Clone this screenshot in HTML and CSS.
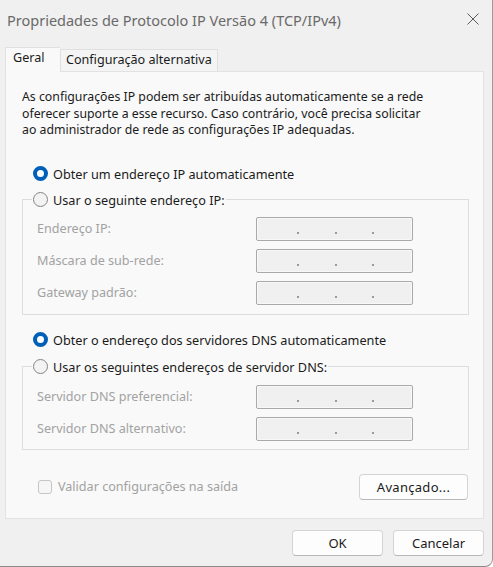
FILE: index.html
```html
<!DOCTYPE html>
<html lang="pt-BR">
<head>
<meta charset="utf-8">
<title>Propriedades de Protocolo IP Versão 4 (TCP/IPv4)</title>
<link rel="stylesheet" href="styles.css">
</head>
<body>
<div class="window">
  <div class="titlebar">
    <span class="title">Propriedades de Protocolo IP Versão 4 (TCP/IPv4)</span>
    <svg class="close" width="12" height="12" viewBox="0 0 12 12"><path d="M0.5 0.5 L11.5 11.5 M11.5 0.5 L0.5 11.5" stroke="#5a5a5a" stroke-width="1" fill="none"/></svg>
  </div>
  <div class="tabs">
    <div class="tab active">Geral</div>
    <div class="tab">Configuração alternativa</div>
  </div>
  <div class="panel">
    <p class="intro">As configurações IP podem ser atribuídas automaticamente se a rede<br>oferecer suporte a esse recurso. Caso contrário, você precisa solicitar<br>ao administrador de rede as configurações IP adequadas.</p>

    <div class="radio-row first"><span class="radio on"></span><span>Obter um endereço IP automaticamente</span></div>
    <fieldset class="group g1">
      <legend><span class="radio"></span><span>Usar o seguinte endereço IP:</span></legend>
      <div class="rows">
        <span class="lbl">Endereço IP:</span><span class="ip"><i></i><b></b><i></i><b></b><i></i><b></b></span>
        <span class="lbl">Máscara de sub-rede:</span><span class="ip"><i></i><b></b><i></i><b></b><i></i><b></b></span>
        <span class="lbl">Gateway padrão:</span><span class="ip"><i></i><b></b><i></i><b></b><i></i><b></b></span>
      </div>
    </fieldset>

    <div class="radio-row second"><span class="radio on"></span><span>Obter o endereço dos servidores DNS automaticamente</span></div>
    <fieldset class="group g2">
      <legend><span class="radio"></span><span>Usar os seguintes endereços de servidor DNS:</span></legend>
      <div class="rows">
        <span class="lbl">Servidor DNS preferencial:</span><span class="ip"><i></i><b></b><i></i><b></b><i></i><b></b></span>
        <span class="lbl">Servidor DNS alternativo:</span><span class="ip"><i></i><b></b><i></i><b></b><i></i><b></b></span>
      </div>
    </fieldset>

    <div class="bottom-row">
      <label class="check"><span class="box"></span><span>Validar configurações na saída</span></label>
      <button class="btn adv">Avançado...</button>
    </div>
  </div>
  <div class="actions">
    <button class="btn">OK</button>
    <button class="btn">Cancelar</button>
  </div>
</div>
</body>
</html>
```
FILE: styles.css
```css
* { box-sizing: border-box; }
html, body { margin: 0; padding: 0; background: #ffffff; }
body {
  font-family: "Noto Sans", "Open Sans", sans-serif;
  font-size: 12.6px;
  color: #1b1b1b;
}
.window {
  width: 493px;
  height: 567px;
  background: #f0f0f0;
  border-right: 1px solid #9a9a9a;
  border-bottom: 1px solid #8a8a8a;
  border-bottom-right-radius: 8px;
  overflow: hidden;
}
.titlebar {
  height: 39px;
  display: flex;
  align-items: center;
  justify-content: space-between;
  padding: 0 13px 0 7px;
}
.title {
  font-size: 14.5px;
  color: #6a6a6a;
}
.close { display: block; margin-top: -1px; }

.tabs {
  margin-top: 8px;
  height: 24px;
  padding-left: 5px;
  display: flex;
  align-items: flex-end;
}
.tab {
  height: 22px;
  line-height: 20px;
  padding: 0 5px;
  background: #f4f4f4;
  border: 1px solid #e0e0e0;
  border-bottom: none;
  white-space: nowrap;
}
.tab.active {
  position: relative;
  z-index: 1;
  height: 25px;
  margin-bottom: -1px;
  width: 55px;
  padding: 0 0 0 7px;
  line-height: 20px;
  background: #f9f9f9;
  border-right: none;
}
.panel {
  margin-left: 5px;
  width: 479px;
  height: 448px;
  background: #f9f9f9;
  border: 1px solid #e2e2e2;
  padding: 17px 14px 0 16px;
}
.intro {
  margin: 0;
  font-size: 12.3px;
  line-height: 16.5px;
  white-space: nowrap;
}
.radio-row, legend {
  display: flex;
  align-items: center;
  height: 20px;
  font-size: 12.7px;
  color: #1b1b1b;
  white-space: nowrap;
}
.radio-row { margin-left: 11px; }
.radio-row.first { margin-top: 25px; }
.radio-row.second { margin-top: 15px; }
.radio {
  width: 15px;
  height: 15px;
  border-radius: 50%;
  border: 1px solid #858585;
  background: #f3f3f3;
  margin-right: 5px;
  flex: none;
}
.radio.on {
  border: 4.5px solid #005fb8;
  background: #ffffff;
}
.group {
  margin: 0;
  padding: 0;
  border: 1px solid #dddddd;
  min-width: 0;
}
.g1 { margin-top: 6px; }
.g2 { margin-top: 7px; }
legend {
  margin-left: 9px;
  padding: 0 1px;
  background: #f9f9f9;
}
.rows {
  display: grid;
  grid-template-columns: 219px 157px;
  grid-auto-rows: 24px;
  row-gap: 8px;
  align-items: center;
  padding: 7px 0 9px 14px;
}
.g2 .rows { padding-top: 8px; padding-bottom: 8px; }
.lbl { color: #a2a2a2; white-space: nowrap; }
.ip {
  height: 24px;
  border: 1px solid #a9a9a9;
  border-radius: 2px;
  background: #f0f0f0;
  box-shadow: inset 0 0 0 1px #f8f8f8;
  display: flex;
  padding-left: 5px;
}
.ip i { flex: 0 0 35px; }
.ip b {
  flex: 0 0 2.5px;
  display: flex;
  align-items: flex-end;
  padding-bottom: 6px;
}
.ip b::after {
  content: "";
  display: block;
  width: 2px;
  height: 2px;
  background: #9a9a9a;
}
.bottom-row {
  margin-top: 24px;
  display: flex;
  align-items: center;
  justify-content: space-between;
  padding-left: 16px;
  padding-right: 1px;
}
.check {
  display: flex;
  align-items: center;
  color: #a2a2a2;
  white-space: nowrap;
}
.box {
  width: 14px;
  height: 14px;
  border: 1px solid #c6c6c6;
  border-radius: 3px;
  background: #f6f6f6;
  margin-right: 6px;
}
.btn {
  font-family: inherit;
  font-size: 13px;
  color: #1b1b1b;
  height: 26px;
  background: #fdfdfd;
  border: 1px solid #d4d4d4;
  border-bottom-color: #b8b8b8;
  border-radius: 4px;
  padding: 0;
}
.btn.adv { width: 109px; letter-spacing: 0.3px; }
.actions {
  display: flex;
  justify-content: flex-end;
  gap: 10px;
  padding: 11px 8px 0 0;
}
.actions .btn { width: 91px; }
```
